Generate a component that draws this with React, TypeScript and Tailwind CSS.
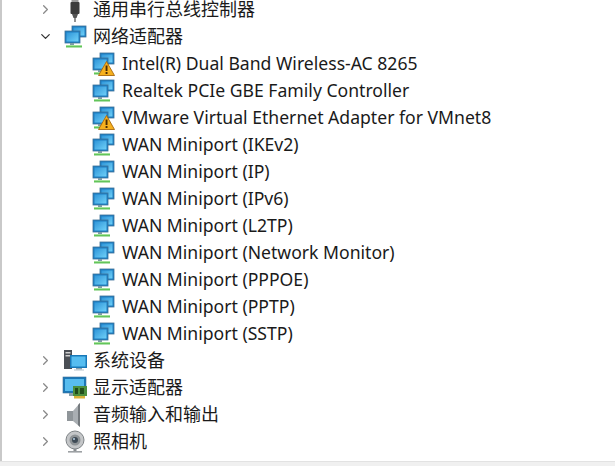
import React from 'react';
import { ChevronRight, ChevronDown } from 'lucide-react';

const NetIcon = ({ warn = false }: { warn?: boolean }) => (
  <svg width="24" height="24" viewBox="0 0 24 24" className="shrink-0">
    <defs>
      <linearGradient id="screen" x1="0" y1="0" x2="1" y2="1">
        <stop offset="0" stopColor="#2f95d8" />
        <stop offset="1" stopColor="#6fd0f8" />
      </linearGradient>
    </defs>
    <rect x="9" y="1" width="14" height="11" fill="#1c7fc4" stroke="#3d6f96" strokeWidth="0.8" />
    <rect x="10.5" y="2.5" width="11" height="8" fill="url(#screen)" />
    <rect x="2" y="6" width="15" height="12" fill="#1c7fc4" stroke="#3d6f96" strokeWidth="0.8" />
    <rect x="3.5" y="7.5" width="12" height="9" fill="url(#screen)" />
    <rect x="7" y="18" width="4" height="2" fill="#7d9aa8" />
    <rect x="3" y="20" width="16" height="2.5" fill="#62c45a" />
    <rect x="3" y="20" width="16" height="1" fill="#a4e29a" />
    {warn && (
      <>
        <path d="M15.5 9.5 L23.5 23.5 L7.5 23.5 Z" fill="#f6b01e" stroke="#a8690f" strokeWidth="0.9" strokeLinejoin="round" />
        <rect x="14.6" y="13.5" width="1.9" height="5.5" fill="#4a2c05" />
        <rect x="14.6" y="20" width="1.9" height="2" fill="#4a2c05" />
      </>
    )}
  </svg>
);

const UsbIcon = () => (
  <svg width="24" height="24" viewBox="0 0 24 24" className="shrink-0">
    <rect x="8.5" y="-1" width="7" height="6" fill="#9a9a9a" />
    <rect x="7.5" y="4" width="9" height="12" rx="1" fill="#3c3c3c" />
    <path d="M9 16 L15 16 L13.5 20 L10.5 20 Z" fill="#555" />
    <rect x="11.2" y="20" width="1.6" height="4" fill="#777" />
  </svg>
);

const SystemIcon = () => (
  <svg width="24" height="24" viewBox="0 0 24 24" className="shrink-0">
    <rect x="1" y="1" width="8" height="19" fill="#4b4f55" />
    <rect x="2.5" y="3" width="5" height="1.5" fill="#d0d0d0" />
    <rect x="2.5" y="6" width="5" height="1.5" fill="#d0d0d0" />
    <rect x="7" y="6" width="17" height="13" fill="#1878b8" />
    <rect x="8.5" y="7.5" width="14" height="10" fill="#56bdf0" />
    <rect x="13" y="19" width="6" height="1.5" fill="#8aa0ac" />
    <rect x="11" y="20.5" width="10" height="1" fill="#b8c4cc" />
  </svg>
);

const DisplayIcon = () => (
  <svg width="26" height="24" viewBox="0 0 26 24" className="shrink-0">
    <rect x="1" y="1" width="23" height="16" fill="#1a78b8" stroke="#3d6f96" strokeWidth="0.6" />
    <rect x="3" y="3" width="19" height="12" fill="#58bcee" />
    <rect x="7" y="17" width="8" height="3" fill="#8aa0ac" />
    <rect x="11" y="10" width="14" height="10" fill="#4c8f3e" />
    <rect x="13" y="12" width="3" height="6" fill="#1f4a1a" />
    <rect x="18" y="12" width="4" height="6" fill="#234f1d" />
    <rect x="12" y="20" width="11" height="2.5" fill="#d8b23a" />
  </svg>
);

const SpeakerIcon = () => (
  <svg width="24" height="24" viewBox="0 0 24 24" className="shrink-0">
    <rect x="4" y="8" width="6" height="10" fill="#8f9599" />
    <path d="M10 8 L17 0 L17 24 L10 18 Z" fill="#a9aeb2" />
    <path d="M15 2 L17 0 L17 24 L15 22 Z" fill="#74797d" />
  </svg>
);

const CameraIcon = () => (
  <svg width="24" height="24" viewBox="0 0 24 24" className="shrink-0">
    <circle cx="12" cy="10" r="9" fill="#c4c6c8" stroke="#7f8487" strokeWidth="1" />
    <circle cx="12" cy="10" r="5.5" fill="#8e9396" />
    <circle cx="12" cy="10" r="3" fill="#3e4a55" />
    <circle cx="11" cy="9" r="1" fill="#b8d2e6" />
    <rect x="10.5" y="19" width="3" height="2" fill="#8a8e91" />
    <rect x="5" y="21" width="14" height="1.6" fill="#9da1a4" />
  </svg>
);

const Category = ({ icon, label, expanded = false }: { icon: React.ReactNode; label: string; expanded?: boolean }) => (
  <div className="h-[27px] flex items-center pl-[34px]">
    <div className="w-[18px] flex justify-center shrink-0">
      {expanded ? (
        <ChevronDown className="w-[15px] h-[15px] text-[#333]" strokeWidth={2} />
      ) : (
        <ChevronRight className="w-[15px] h-[15px] text-[#8a8a8a]" strokeWidth={2} />
      )}
    </div>
    <div className="w-[26px] ml-[8px] mr-[5px] flex justify-center shrink-0">{icon}</div>
    <span className="whitespace-nowrap">{label}</span>
  </div>
);

const adapters = [
  { name: 'Intel(R) Dual Band Wireless-AC 8265', warn: true },
  { name: 'Realtek PCIe GBE Family Controller', warn: false },
  { name: 'VMware Virtual Ethernet Adapter for VMnet8', warn: true },
  { name: 'WAN Miniport (IKEv2)', warn: false },
  { name: 'WAN Miniport (IP)', warn: false },
  { name: 'WAN Miniport (IPv6)', warn: false },
  { name: 'WAN Miniport (L2TP)', warn: false },
  { name: 'WAN Miniport (Network Monitor)', warn: false },
  { name: 'WAN Miniport (PPPOE)', warn: false },
  { name: 'WAN Miniport (PPTP)', warn: false },
  { name: 'WAN Miniport (SSTP)', warn: false },
];

export default function App() {
  return (
    <div className="w-[615px] h-[466px] overflow-hidden bg-white flex flex-col text-[18px] text-[#1a1a1a] font-['Noto_Sans','Noto_Sans_CJK_SC',sans-serif]">
      <div className="flex-1 min-h-0 border-l-2 border-[#c9c9c9] overflow-hidden">
        <div className="-mt-[4px]">
          <Category icon={<UsbIcon />} label="通用串行总线控制器" />
          <Category icon={<NetIcon />} label="网络适配器" expanded />
          {adapters.map((a) => (
            <div key={a.name} className="h-[27px] flex items-center pl-[89px]">
              <NetIcon warn={a.warn} />
              <span className="ml-[7px] whitespace-nowrap text-[17.6px]">{a.name}</span>
            </div>
          ))}
          <Category icon={<SystemIcon />} label="系统设备" />
          <Category icon={<DisplayIcon />} label="显示适配器" />
          <Category icon={<SpeakerIcon />} label="音频输入和输出" />
          <Category icon={<CameraIcon />} label="照相机" />
        </div>
      </div>
      <div className="h-[5px] bg-[#f0f0f0] border-t border-[#e2e2e2] shrink-0" />
    </div>
  );
}
